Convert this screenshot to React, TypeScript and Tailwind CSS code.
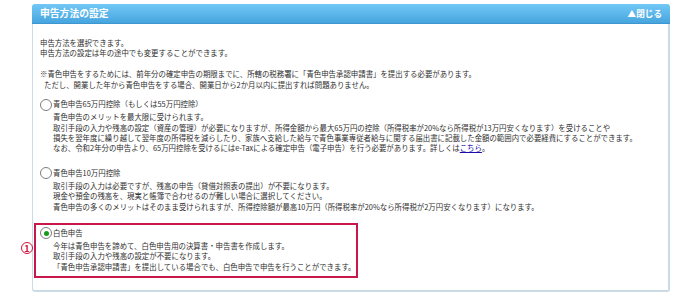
import React from "react";

type Option = {
  label: string;
  lines: React.ReactNode[];
  checked?: boolean;
};

const options: Option[] = [
  {
    label: "青色申告65万円控除（もしくは55万円控除）",
    lines: [
      "青色申告のメリットを最大限に受けられます。",
      "取引手段の入力や残高の設定（資産の管理）が必要になりますが、所得金額から最大65万円の控除（所得税率が20%なら所得税が13万円安くなります）を受けることや",
      "損失を翌年度に繰り越して翌年度の所得税を減らしたり、家族へ支給した給与で青色事業専従者給与に関する届出書に記載した金額の範囲内で必要経費にすることができます。",
      <>
        なお、令和2年分の申告より、65万円控除を受けるにはe-Taxによる確定申告（電子申告）を行う必要があります。詳しくは
        <a className="text-[#1a0dab] underline" href="#">
          こちら
        </a>
        。
      </>,
    ],
  },
  {
    label: "青色申告10万円控除",
    lines: [
      "取引手段の入力は必要ですが、残高の申告（貸借対照表の提出）が不要になります。",
      "現金や預金の残高を、現実と帳簿で合わせるのが難しい場合に選択してください。",
      "青色申告の多くのメリットはそのまま受けられますが、所得控除額が最高10万円（所得税率が20%なら所得税が2万円安くなります）になります。",
    ],
  },
];

function Radio({ checked }: { checked?: boolean }) {
  return (
    <span className="w-[12px] h-[12px] rounded-full border border-[#7d7d7d] bg-white flex items-center justify-center shrink-0 mr-[1px]">
      {checked && <span className="w-[5px] h-[5px] rounded-full bg-[#1a9a1a]" />}
    </span>
  );
}

function OptionBlock({ label, lines, checked }: Option) {
  return (
    <div>
      <div className="flex items-center h-[13px]">
        <Radio checked={checked} />
        <span>{label}</span>
      </div>
      <div className="pl-[13px] pt-[1px]">
        {lines.map((l, i) => (
          <div key={i}>{l}</div>
        ))}
      </div>
    </div>
  );
}

export default function App() {
  return (
    <div
      className="w-[700px] h-[296px] bg-white relative text-[#2e2e2e] text-[7.42px] leading-[10.4px]"
      style={{ fontFamily: '"Noto Sans CJK JP", "Noto Sans", sans-serif' }}
    >
      <div className="ml-[32px] pt-[4px] w-[638px]">
        <div className="h-[20px] rounded-t-[3px] bg-gradient-to-b from-[#72c8f6] to-[#46a5de] border-b border-[#3d96cf] flex items-center justify-between pl-[8px] pr-[8px]">
          <span className="text-white font-bold text-[9.8px]">申告方法の設定</span>
          <span className="text-white font-bold text-[8.6px]">▲閉じる</span>
        </div>
        <div className="h-[268px] border-l border-r-2 border-b-2 border-[#cbdbe6] rounded-b-[3px] pt-[14px] pl-[7px] relative">
          <div>申告方法を選択できます。</div>
          <div>申告方法の設定は年の途中でも変更することができます。</div>

          <div className="mt-[10.5px]">
            ※青色申告をするためには、前年分の確定申告の期限までに、所轄の税務署に「青色申告承認申請書」を提出する必要があります。
          </div>
          <div className="pl-[4px]">
            ただし、開業した年から青色申告をする場合、開業日から2か月以内に提出すれば問題ありません。
          </div>

          <div className="mt-[8px]">
            <OptionBlock {...options[0]} />
          </div>
          <div className="mt-[13px]">
            <OptionBlock {...options[1]} />
          </div>

          <div className="mt-[11px] -ml-[6px] w-[324px] border-2 border-[#c8174a] pl-[4px] pt-[2px] pb-[4px]">
            <OptionBlock
              checked
              label="白色申告"
              lines={[
                "今年は青色申告を諦めて、白色申告用の決算書・申告書を作成します。",
                "取引手段の入力や残高の設定が不要になります。",
                "「青色申告承認申請書」を提出している場合でも、白色申告で申告を行うことができます。",
              ]}
            />
          </div>
        </div>
      </div>
      <div className="absolute left-[21px] top-[242px] w-[12px] h-[12px] rounded-full border border-[#d0103a] text-[#d0103a] text-[9px] leading-none font-bold flex items-center justify-center">
        1
      </div>
    </div>
  );
}
